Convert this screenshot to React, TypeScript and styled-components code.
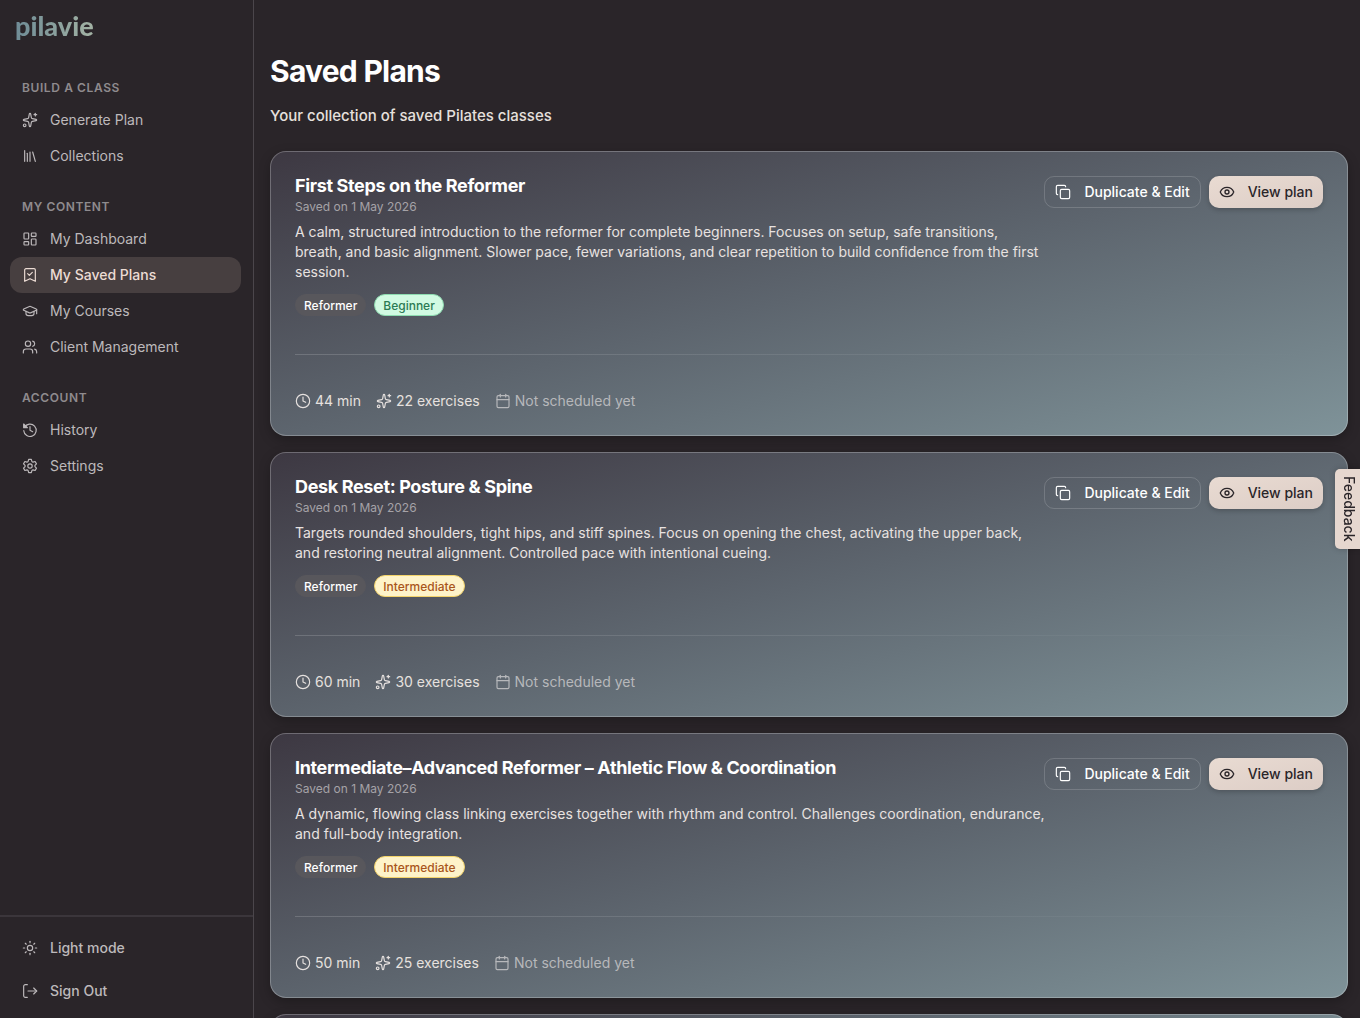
import React from 'react';
import styled, { createGlobalStyle, css } from 'styled-components';
import {
  Sparkles,
  Library,
  LayoutDashboard,
  GraduationCap,
  Users,
  Copy,
  Eye,
  Clock,
  Calendar,
  Sun,
} from 'lucide-react';

const GlobalStyle = createGlobalStyle`
  *, *::before, *::after { box-sizing: border-box; }
  body {
    margin: 0;
    background: #2a2529;
    color: #ffffff;
    font-family: Inter, "Liberation Sans", sans-serif;
    font-size: 14px;
    line-height: 20px;
    -webkit-font-smoothing: antialiased;
  }
  h1, h2, p, ul { margin: 0; padding: 0; }
  ul { list-style: none; }
  button { font: inherit; cursor: pointer; }
`;

const Shell = styled.div`
  display: flex;
  height: 100vh;
`;

const Sidebar = styled.aside`
  flex: 0 0 254px;
  display: flex;
  flex-direction: column;
  border-right: 1px solid #4b464b;
`;

const Brand = styled.a`
  display: block;
  padding: 9px 15px 0;
  height: 80px;
  text-decoration: none;
`;

const Wordmark = styled.span`
  display: inline-block;
  font-family: Lato, sans-serif;
  font-weight: 900;
  font-size: 27px;
  line-height: 34px;
  color: transparent;
  background: linear-gradient(90deg, #6f8c96, #a3b3a4);
  background-clip: text;
`;

const Nav = styled.nav`
  flex: 1;
  display: flex;
  flex-direction: column;
  gap: 25px;
  padding: 0 12px 0 10px;
`;

const GroupLabel = styled.p`
  padding-left: 12px;
  margin-bottom: 6px;
  font-size: 12px;
  line-height: 16px;
  font-weight: 600;
  letter-spacing: 0.05em;
  text-transform: uppercase;
  color: #8f8b8e;
`;

const itemStyle = css`
  display: flex;
  align-items: center;
  gap: 12px;
  width: 100%;
  height: 36px;
  padding: 0 12px;
  border: 0;
  border-radius: 12px;
  background: transparent;
  color: #bdb9bb;
  text-decoration: none;
  svg { flex: none; }
`;

const NavLink = styled.a<{ $active?: boolean }>`
  ${itemStyle}
  ${(p) =>
    p.$active &&
    css`
      background: #473f40;
      color: #ecdcd4;
      font-weight: 500;
    `}
`;

const SidebarFooter = styled.div`
  display: flex;
  flex-direction: column;
  gap: 7px;
  padding: 13px 12px 9px 10px;
  border-top: 2px solid #3b363b;
`;

const FooterButton = styled.button`
  ${itemStyle}
  font-weight: 500;
`;

const Main = styled.main`
  flex: 1;
  min-width: 0;
  overflow-y: auto;
  scrollbar-width: none;
  padding: 53px 12px 16px 16px;
`;

const Title = styled.h1`
  font-size: 30px;
  line-height: 36px;
  font-weight: 700;
  letter-spacing: -0.025em;
`;

const Subtitle = styled.p`
  margin: 15px 0 23px;
  font-size: 15px;
  line-height: 24px;
  font-weight: 500;
  color: #e6e0dd;
`;

const PlanList = styled.ul`
  display: flex;
  flex-direction: column;
  gap: 16px;
`;

const Card = styled.li`
  padding: 24px;
  border: 1px solid rgba(255, 255, 255, 0.25);
  border-radius: 16px;
  background: linear-gradient(165deg, #3d3842 0%, #5d656e 50%, #7f9399 100%) border-box;
  box-shadow: 0 4px 12px rgba(0, 0, 0, 0.25);
`;

const CardTop = styled.div`
  display: flex;
  align-items: flex-start;
  justify-content: space-between;
  gap: 16px;
`;

const PlanName = styled.h2`
  font-size: 18px;
  line-height: 20px;
  font-weight: 700;
  letter-spacing: -0.02em;
`;

const SavedOn = styled.p`
  margin-top: 3px;
  font-size: 12px;
  line-height: 16px;
  color: #a5a2a7;
`;

const Description = styled.p`
  max-width: 751px;
  margin-top: 7px;
  color: #e8e2e0;
`;

const Tags = styled.div`
  display: flex;
  gap: 8px;
  margin-top: 12px;
`;

const tones = {
  plain: { bg: '#58575c', line: '#58575c', ink: '#ffffff' },
  beginner: { bg: '#d1fae2', line: '#8ddbb0', ink: '#2c7a54' },
  intermediate: { bg: '#fef3c9', line: '#f3d36a', ink: '#a9561c' },
};

const Tag = styled.span<{ $tone: keyof typeof tones }>`
  padding: 3px 8px 1px;
  border: 1px solid ${(p) => tones[p.$tone].line};
  border-radius: 11px;
  background: ${(p) => tones[p.$tone].bg};
  color: ${(p) => tones[p.$tone].ink};
  font-size: 12px;
  line-height: 16px;
  font-weight: 500;
`;

const Actions = styled.div`
  display: flex;
  flex: none;
  gap: 8px;
`;

const Action = styled.button<{ $primary?: boolean }>`
  display: flex;
  align-items: center;
  gap: 13px;
  height: 32px;
  padding: 0 10px;
  border: 1px solid rgba(255, 255, 255, 0.16);
  border-radius: 10px;
  background: transparent;
  color: #ffffff;
  font-weight: 500;
  white-space: nowrap;
  ${(p) =>
    p.$primary &&
    css`
      border: 0;
      background: linear-gradient(165deg, #e9dbd2, #dccdc6);
      color: #2a2529;
      box-shadow: 0 2px 5px rgba(0, 0, 0, 0.2);
    `}
`;

const Divider = styled.div`
  height: 1px;
  margin: 38px 0 36px;
  background: linear-gradient(90deg, rgba(255, 255, 255, 0.16), rgba(255, 255, 255, 0));
`;

const Facts = styled.div`
  display: flex;
  gap: 15px;
`;

const Fact = styled.span<{ $muted?: boolean }>`
  display: flex;
  align-items: center;
  gap: 4px;
  color: ${(p) => (p.$muted ? '#b7b8bb' : '#e6e1df')};
`;

const Feedback = styled.button`
  position: fixed;
  top: 50%;
  right: 0;
  transform: translateY(-50%);
  width: 25px;
  height: 80px;
  padding: 0 0 0 2px;
  border: 0;
  border-radius: 5px 0 0 5px;
  background: #e6d7cf;
  color: #2a2529;
  font-weight: 500;
  writing-mode: vertical-rl;
  box-shadow: 0 0 6px rgba(0, 0, 0, 0.2);
`;

type IconProps = { size?: number; strokeWidth?: number };

const Glyph = ({ size = 16, strokeWidth = 2, children }: IconProps & { children: React.ReactNode }) => (
  <svg
    width={size}
    height={size}
    viewBox="0 0 24 24"
    fill="none"
    stroke="currentColor"
    strokeWidth={strokeWidth}
    strokeLinecap="round"
    strokeLinejoin="round"
    aria-hidden="true"
  >
    {children}
  </svg>
);

const SavedIcon = (p: IconProps) => (
  <Glyph {...p}>
    <path d="M4 21.500V4.500a2 2 0 0 1 2-2h12a2 2 0 0 1 2 2v17l-8-4Z" />
    <path d="m8.500 10 2.500 2.500 4.500-4.500" />
  </Glyph>
);

const HistoryIcon = (p: IconProps) => (
  <Glyph {...p}>
    <path d="M3.800 8A9.300 9.300 0 1 1 2.700 13" />
    <path d="M2.500 3v5.500h5.500Z" fill="currentColor" />
    <path d="M12 7v5.500l4 2" />
  </Glyph>
);

const SettingsIcon = (p: IconProps) => (
  <Glyph {...p}>
    <path d="M10 2h4l.8 3.200 1.700 1 3.200-.9 2 3.500-2.300 2.400v1.600l2.300 2.400-2 3.500-3.200-.9-1.700 1L14 22h-4l-.8-3.200-1.700-1-3.200.9-2-3.500 2.300-2.400v-1.600L2.300 8.800l2-3.500 3.200.9 1.700-1Z" />
    <circle cx="12" cy="12" r="3.300" />
  </Glyph>
);

const SignOutIcon = (p: IconProps) => (
  <Glyph {...p}>
    <path d="M8 2.500H5a2.500 2.500 0 0 0-2.500 2.500v14A2.500 2.500 0 0 0 5 21.500h3" />
    <path d="M9 12h13" />
    <path d="m17.500 7.500 4.500 4.500-4.500 4.500" />
  </Glyph>
);

type NavEntry = { label: string; icon: React.ComponentType<any>; active?: boolean };

const groups: { title: string; items: NavEntry[] }[] = [
  {
    title: 'Build a class',
    items: [
      { label: 'Generate Plan', icon: Sparkles },
      { label: 'Collections', icon: Library },
    ],
  },
  {
    title: 'My content',
    items: [
      { label: 'My Dashboard', icon: LayoutDashboard },
      { label: 'My Saved Plans', icon: SavedIcon, active: true },
      { label: 'My Courses', icon: GraduationCap },
      { label: 'Client Management', icon: Users },
    ],
  },
  {
    title: 'Account',
    items: [
      { label: 'History', icon: HistoryIcon },
      { label: 'Settings', icon: SettingsIcon },
    ],
  },
];

type Plan = {
  name: string;
  text: string;
  level: 'Beginner' | 'Intermediate';
  minutes: number;
  exercises: number;
};

const plans: Plan[] = [
  {
    name: 'First Steps on the Reformer',
    text: 'A calm, structured introduction to the reformer for complete beginners. Focuses on setup, safe transitions, breath, and basic alignment. Slower pace, fewer variations, and clear repetition to build confidence from the first session.',
    level: 'Beginner',
    minutes: 44,
    exercises: 22,
  },
  {
    name: 'Desk Reset: Posture & Spine',
    text: 'Targets rounded shoulders, tight hips, and stiff spines. Focus on opening the chest, activating the upper back, and restoring neutral alignment. Controlled pace with intentional cueing.',
    level: 'Intermediate',
    minutes: 60,
    exercises: 30,
  },
  {
    name: 'Intermediate–Advanced Reformer – Athletic Flow & Coordination',
    text: 'A dynamic, flowing class linking exercises together with rhythm and control. Challenges coordination, endurance, and full-body integration.',
    level: 'Intermediate',
    minutes: 50,
    exercises: 25,
  },
];

const PlanCard = ({ plan }: { plan: Plan }) => (
  <Card>
    <CardTop>
      <div>
        <PlanName>{plan.name}</PlanName>
        <SavedOn>Saved on 1 May 2026</SavedOn>
      </div>
      <Actions>
        <Action type="button">
          <Copy size={16} strokeWidth={1.75} />
          Duplicate &amp; Edit
        </Action>
        <Action type="button" $primary>
          <Eye size={16} strokeWidth={2} />
          View plan
        </Action>
      </Actions>
    </CardTop>
    <Description>{plan.text}</Description>
    <Tags>
      <Tag $tone="plain">Reformer</Tag>
      <Tag $tone={plan.level === 'Beginner' ? 'beginner' : 'intermediate'}>{plan.level}</Tag>
    </Tags>
    <Divider />
    <Facts>
      <Fact>
        <Clock size={16} strokeWidth={1.75} />
        {plan.minutes} min
      </Fact>
      <Fact>
        <Sparkles size={16} strokeWidth={1.75} />
        {plan.exercises} exercises
      </Fact>
      <Fact $muted>
        <Calendar size={16} strokeWidth={1.75} />
        Not scheduled yet
      </Fact>
    </Facts>
  </Card>
);

export default function App() {
  return (
    <>
      <GlobalStyle />
      <Shell>
        <Sidebar>
          <Brand href="#home">
            <Wordmark>pilavie</Wordmark>
          </Brand>
          <Nav>
            {groups.map((group) => (
              <div key={group.title}>
                <GroupLabel>{group.title}</GroupLabel>
                {group.items.map(({ label, icon: Icon, active }) => (
                  <NavLink key={label} href="#" $active={active} aria-current={active ? 'page' : undefined}>
                    <Icon size={16} strokeWidth={1.75} />
                    {label}
                  </NavLink>
                ))}
              </div>
            ))}
          </Nav>
          <SidebarFooter>
            <FooterButton type="button">
              <Sun size={16} strokeWidth={1.75} />
              Light mode
            </FooterButton>
            <FooterButton type="button">
              <SignOutIcon strokeWidth={1.75} />
              Sign Out
            </FooterButton>
          </SidebarFooter>
        </Sidebar>
        <Main>
          <Title>Saved Plans</Title>
          <Subtitle>Your collection of saved Pilates classes</Subtitle>
          <PlanList>
            {plans.map((plan) => (
              <PlanCard key={plan.name} plan={plan} />
            ))}
            <Card aria-hidden="true" />
          </PlanList>
        </Main>
      </Shell>
      <Feedback type="button">Feedback</Feedback>
    </>
  );
}
